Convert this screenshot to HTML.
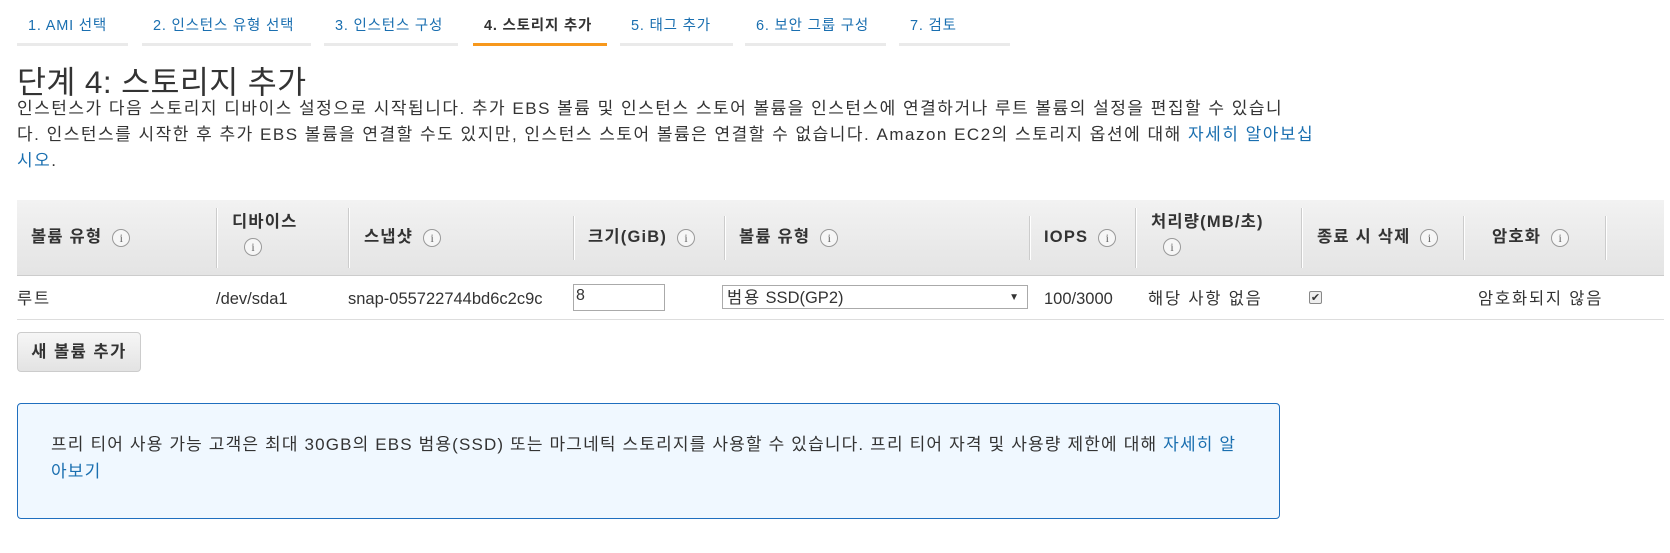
<!DOCTYPE html>
<html><head><meta charset="utf-8"><style>
body{margin:0;width:1670px;height:553px;background:#fff;position:relative;overflow:hidden;font-family:"Liberation Sans","Noto Sans CJK KR",sans-serif;color:#333}
.a{position:absolute;white-space:nowrap}
.tab{position:absolute;top:0;height:46px;border-bottom:3px solid #eaeaea;box-sizing:border-box;font-size:14.5px;letter-spacing:0.8px;color:#1a6fb0;padding-left:11px;line-height:52px}
.tab.on{border-bottom-color:#f7981d;color:#333;font-weight:bold}
.lnk{color:#1a6fb0}
.hd{position:absolute;left:17px;top:200px;width:1647px;height:75px;background:linear-gradient(#f2f2f2,#e4e4e4);border-bottom:1px solid #ccc}
.sep{position:absolute;top:216px;width:1px;height:44px;background:#ccc;border-right:1px solid #fff}
.h{position:absolute;font-size:16.5px;letter-spacing:1.2px;font-weight:bold;color:#333;white-space:nowrap;line-height:20px}
.i{display:inline-block;width:18px;height:18px;border:1px solid #999;border-radius:50%;font:12px "Liberation Serif",serif;letter-spacing:0;text-align:center;line-height:17px;color:#666;vertical-align:middle;margin-left:10px;background:#f6f6f6;box-sizing:border-box}
.c{position:absolute;top:289px;font-size:16.5px;line-height:20px;white-space:nowrap}
.k{letter-spacing:1.8px}
</style></head><body>
<div class="tab" style="left:17px;width:111px">1. AMI 선택</div>
<div class="tab" style="left:142px;width:169px">2. 인스턴스 유형 선택</div>
<div class="tab" style="left:324px;width:134px">3. 인스턴스 구성</div>
<div class="tab on" style="left:473px;width:134px">4. 스토리지 추가</div>
<div class="tab" style="left:620px;width:113px">5. 태그 추가</div>
<div class="tab" style="left:745px;width:141px">6. 보안 그룹 구성</div>
<div class="tab" style="left:899px;width:111px">7. 검토</div>

<div class="a" style="left:17px;top:57px;font-size:31.5px;letter-spacing:0.4px;color:#333">단계 4: 스토리지 추가</div>
<div class="a" style="left:17px;top:96px;width:1320px;white-space:nowrap;font-size:17px;letter-spacing:1.5px;line-height:26px">인스턴스가 다음 스토리지 디바이스 설정으로 시작됩니다. 추가 EBS 볼륨 및 인스턴스 스토어 볼륨을 인스턴스에 연결하거나 루트 볼륨의 설정을 편집할 수 있습니<br>다. 인스턴스를 시작한 후 추가 EBS 볼륨을 연결할 수도 있지만, 인스턴스 스토어 볼륨은 연결할 수 없습니다. Amazon EC2의 스토리지 옵션에 대해 <span class="lnk">자세히 알아보십</span><br><span class="lnk">시오</span>.</div>

<div class="hd"></div>
<div class="sep" style="left:216px;top:208px;height:60px"></div>
<div class="sep" style="left:348px;top:208px;height:60px"></div>
<div class="sep" style="left:573px"></div>
<div class="sep" style="left:724px"></div>
<div class="sep" style="left:1029px"></div>
<div class="sep" style="left:1135px;top:208px;height:60px"></div>
<div class="sep" style="left:1301px;top:208px;height:60px"></div>
<div class="sep" style="left:1463px"></div>
<div class="sep" style="left:1605px"></div>

<div class="h" style="left:31px;top:227px">볼륨 유형<span class="i">i</span></div>
<div class="h" style="left:232px;top:212px">디바이스<br><span class="i" style="margin:6px 0 0 12px">i</span></div>
<div class="h" style="left:364px;top:227px">스냅샷<span class="i">i</span></div>
<div class="h" style="left:588px;top:227px">크기(GiB)<span class="i">i</span></div>
<div class="h" style="left:739px;top:227px">볼륨 유형<span class="i">i</span></div>
<div class="h" style="left:1044px;top:227px">IOPS<span class="i">i</span></div>
<div class="h" style="left:1151px;top:212px">처리량(MB/초)<br><span class="i" style="margin:6px 0 0 12px">i</span></div>
<div class="h" style="left:1317px;top:227px">종료 시 삭제<span class="i">i</span></div>
<div class="h" style="left:1492px;top:227px">암호화<span class="i">i</span></div>

<div style="position:absolute;left:17px;top:319px;width:1647px;height:1px;background:#ddd"></div>
<div class="c k" style="left:17px">루트</div>
<div class="c" style="left:216px">/dev/sda1</div>
<div class="c" style="left:348px">snap-055722744bd6c2c9c</div>
<div style="position:absolute;left:573px;top:284px;width:92px;height:27px;border:1px solid #aaa;box-sizing:border-box;font-size:16px;padding-left:2px;line-height:22px">8</div>
<div style="position:absolute;left:722px;top:285px;width:306px;height:24px;border:1px solid #aaa;box-sizing:border-box;font-size:16.5px;padding-left:4px;line-height:24px"><span class="k">범용</span> SSD(GP2)<span style="position:absolute;right:8px;top:0;font-size:10px">▼</span></div>
<div class="c" style="left:1044px">100/3000</div>
<div class="c k" style="left:1148px">해당 사항 없음</div>
<div style="position:absolute;left:1309px;top:291px;width:13px;height:13px;border:1px solid #888;border-radius:2px;background:#eee;font-size:11px;line-height:13px;text-align:center;box-sizing:border-box">✔</div>
<div class="c k" style="left:1478px">암호화되지 않음</div>

<div style="position:absolute;left:17px;top:332px;width:124px;height:40px;border:1px solid #ccc;border-radius:4px;background:linear-gradient(#f6f6f6,#e3e3e3);box-sizing:border-box;font-size:16.5px;letter-spacing:1.5px;font-weight:bold;text-align:center;line-height:38px">새 볼륨 추가</div>

<div style="position:absolute;left:17px;top:403px;width:1263px;height:116px;border:1px solid #1f6fbf;border-radius:4px;background:#f0f8ff;box-sizing:border-box"></div>
<div class="a" style="left:51px;top:431px;font-size:17px;letter-spacing:1.15px;line-height:27px">프리 티어 사용 가능 고객은 최대 30GB의 EBS 범용(SSD) 또는 마그네틱 스토리지를 사용할 수 있습니다. 프리 티어 자격 및 사용량 제한에 대해 <span class="lnk">자세히 알</span><br><span class="lnk">아보기</span></div>
</body></html>
